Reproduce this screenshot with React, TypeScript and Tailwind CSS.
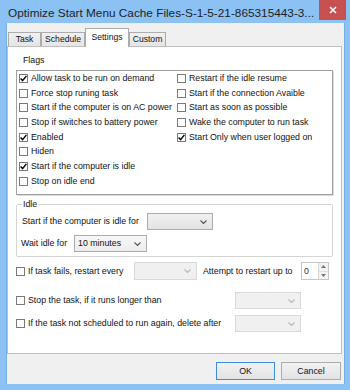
import React from "react";

function Check({ checked = false }: { checked?: boolean }) {
  return (
    <span className="flex h-[9px] w-[9px] shrink-0 items-center justify-center border border-[#7a7a7a] bg-white">
      {checked && (
        <svg width="7" height="7" viewBox="0 0 7 7">
          <path d="M0.6 3.5 L2.6 5.6 L6.4 0.9" fill="none" stroke="#000" strokeWidth="1.4" />
        </svg>
      )}
    </span>
  );
}

function Flag({ label, checked = false }: { label: string; checked?: boolean }) {
  return (
    <div className="flex h-[14.7px] items-center gap-[3px] whitespace-nowrap">
      <Check checked={checked} />
      <span>{label}</span>
    </div>
  );
}

function Chevron({ color }: { color: string }) {
  return (
    <svg width="7" height="4" viewBox="0 0 7 4" className="shrink-0">
      <polyline points="0.5,0.5 3.5,3.5 6.5,0.5" fill="none" stroke={color} strokeWidth="1.1" />
    </svg>
  );
}

function Combo({ className, text, disabled = false, light = false }: { className: string; text?: string; disabled?: boolean; light?: boolean }) {
  const skin = disabled
    ? "border-[#d9d9d9] bg-[#f0f0f0]"
    : light
    ? "border-[#acacac] bg-linear-to-b from-[#f7f7f7] to-[#ededed]"
    : "border-[#acacac] bg-linear-to-b from-[#f0f0f0] to-[#e3e3e3]";
  return (
    <div className={`flex shrink-0 items-center border pl-[3px] pr-[5px] ${skin} ${className}`}>
      <span className="flex-1 whitespace-nowrap">{text}</span>
      <Chevron color={disabled ? "#b8b8b8" : "#555"} />
    </div>
  );
}

function Spin() {
  return (
    <div className="flex h-[18px] w-[28px] shrink-0 border border-[#c6c6c6] bg-white">
      <span className="flex flex-1 items-center pl-[2px] text-[#333]">0</span>
      <div className="flex w-[10px] flex-col border-l border-[#d6d6d6] bg-[#f3f3f3]">
        <div className="flex flex-1 items-center justify-center">
          <svg width="5" height="3" viewBox="0 0 5 3">
            <polygon points="0,3 2.5,0 5,3" fill="#777" />
          </svg>
        </div>
        <div className="flex flex-1 items-center justify-center border-t border-[#e0e0e0]">
          <svg width="5" height="3" viewBox="0 0 5 3">
            <polygon points="0,0 2.5,3 5,0" fill="#777" />
          </svg>
        </div>
      </div>
    </div>
  );
}

export default function App() {
  return (
    <div className="flex h-[390px] w-[350px] flex-col bg-[#8cc2f3] font-['Liberation_Sans',Arial,sans-serif] text-[8.8px] leading-none text-[#111]">
      {/* Title bar */}
      <div className="flex h-[23px] shrink-0">
        <div className="flex-1 overflow-hidden whitespace-nowrap pl-[8px] pt-[6px] text-[11.8px] leading-[14px] text-[#1e1e1e]">
          Optimize Start Menu Cache Files-S-1-5-21-865315443-3...
        </div>
        <div className="mr-[4px] flex h-[20px] w-[27px] items-center justify-center bg-[#c75050]">
          <svg width="8" height="8" viewBox="0 0 8 8">
            <path d="M1 1 L7 7 M7 1 L1 7" stroke="#fff" strokeWidth="1.5" />
          </svg>
        </div>
      </div>

      {/* Client area */}
      <div className="mb-[6px] ml-[6px] mr-[5px] flex flex-1 flex-col border-x border-[#78aee2] bg-[#f0f0f0]">
        {/* Tabs */}
        <div className="flex h-[23px] shrink-0 items-end pl-[1px] text-[8.6px]">
          <div className="flex h-[14px] w-[33px] items-center justify-center border border-b-0 border-[#acacac] bg-linear-to-b from-[#f0f0f0] to-[#e5e5e5]">
            Task
          </div>
          <div className="flex h-[14px] w-[44px] items-center justify-center border border-b-0 border-[#acacac] bg-linear-to-b from-[#f0f0f0] to-[#e5e5e5]">
            Schedule
          </div>
          <div className="relative z-10 mb-[-1px] flex h-[19px] w-[44px] items-center justify-center border border-b-0 border-[#acacac] bg-white pb-[2px]">
            Settings
          </div>
          <div className="flex h-[14px] w-[37px] items-center justify-center border border-b-0 border-[#acacac] bg-linear-to-b from-[#f0f0f0] to-[#e5e5e5]">
            Custom
          </div>
        </div>

        {/* Tab panel */}
        <div className="mr-[2px] flex h-[308px] shrink-0 flex-col border border-[#c0c0c0] bg-white pl-[8px]">
          <div className="mt-[6px] h-[14px] pl-[7px] leading-[14px]">Flags</div>
          <div className="mt-[3px] flex h-[125px] w-[317px] border border-[#a0a0a0] shadow-[1px_1px_0_#dcdcdc]">
            <div className="w-[160px] pl-[2px]">
              <Flag label="Allow task to be run on demand" checked />
              <Flag label="Force stop runing task" />
              <Flag label="Start if the computer is on AC power" />
              <Flag label="Stop if switches to battery power" />
              <Flag label="Enabled" checked />
              <Flag label="Hiden" />
              <Flag label="Start if the computer is idle" checked />
              <Flag label="Stop on idle end" />
            </div>
            <div>
              <Flag label="Restart if the idle resume" />
              <Flag label="Start if the connection Avaible" />
              <Flag label="Start as soon as possible" />
              <Flag label="Wake the computer to run task" />
              <Flag label="Start Only when user logged on" checked />
            </div>
          </div>

          {/* Idle group */}
          <div className="relative mt-[9px] h-[53px] w-[317px] rounded-[2px] border border-[#d5d5d5]">
            <span className="absolute left-[5px] top-[-6px] bg-white px-[1px] leading-[11px]">Idle</span>
            <div className="mt-[8px] flex h-[17px] items-center pl-[5px]">
              <span className="w-[125px] whitespace-nowrap">Start if the computer is idle for</span>
              <Combo className="h-[17px] w-[66px]" />
            </div>
            <div className="mt-[5px] flex h-[17px] items-center pl-[4px]">
              <span className="w-[53px] whitespace-nowrap">Wait idle for</span>
              <Combo className="h-[17px] w-[73px]" text="10 minutes" light />
            </div>
          </div>

          <div className="mt-[5px] flex h-[18px] items-center">
            <Check />
            <span className="ml-[3px] w-[106px] whitespace-nowrap">If task fails, restart every</span>
            <Combo className="h-[18px] w-[63px]" disabled />
            <span className="ml-[6px] w-[98px] whitespace-nowrap">Attempt to restart up to</span>
            <Spin />
          </div>

          <div className="mt-[12px] flex h-[17px] items-center">
            <Check />
            <span className="ml-[3px] w-[207px] whitespace-nowrap">Stop the task, if it runs longer than</span>
            <Combo className="h-[17px] w-[66px]" disabled />
          </div>

          <div className="mt-[6px] flex h-[17px] items-center">
            <Check />
            <span className="ml-[3px] w-[207px] whitespace-nowrap">If the task not scheduled to run again, delete after</span>
            <Combo className="h-[17px] w-[66px]" disabled />
          </div>
        </div>

        {/* Button bar */}
        <div className="flex flex-1 items-start justify-end gap-[6px] pr-[3px] pt-[8px]">
          <button className="flex h-[18px] w-[59px] items-center justify-center border border-[#3d8ee0] bg-linear-to-b from-[#f2f2f2] to-[#e3e3e3]">
            OK
          </button>
          <button className="flex h-[18px] w-[60px] items-center justify-center border border-[#acacac] bg-linear-to-b from-[#f2f2f2] to-[#e3e3e3]">
            Cancel
          </button>
        </div>
      </div>
    </div>
  );
}
